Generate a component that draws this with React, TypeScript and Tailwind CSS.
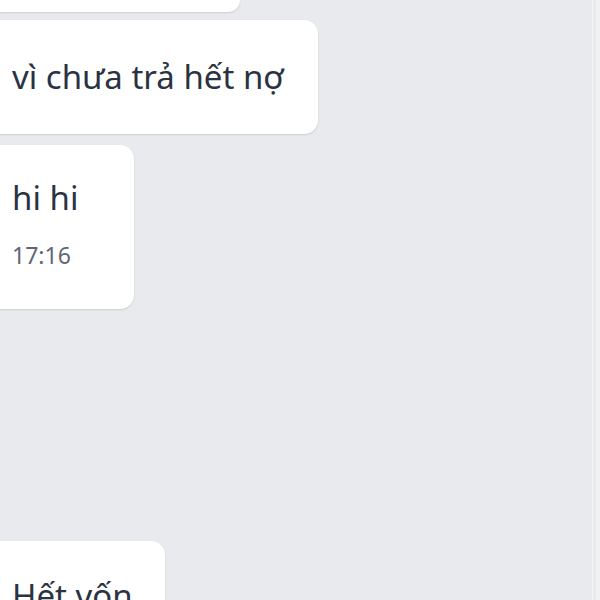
import React from 'react';

const bubble =
  'bg-white rounded-r-[14px] shadow-[0_1px_2px_rgba(0,0,0,0.12)]';

export default function App() {
  return (
    <div
      className="w-[600px] h-[600px] overflow-hidden bg-[#e9eaee] flex"
      style={{ fontFamily: '"Noto Sans", "Open Sans", sans-serif' }}
    >
      <div className="flex-1 flex flex-col">
        <div className={`${bubble} w-[240px] h-[12px] shrink-0 rounded-tr-none`} />

        <div className={`${bubble} mt-[8px] w-[318px] h-[114px] shrink-0 flex items-center pl-[12px]`}>
          <span className="text-[33px] leading-none text-[#2b3342] -mt-[1px]">vì chưa trả hết nợ</span>
        </div>

        <div className={`${bubble} mt-[11px] w-[134px] h-[164px] shrink-0 flex flex-col pl-[12px] pt-[36px]`}>
          <span className="text-[33px] leading-none text-[#2b3342]">hi hi</span>
          <span className="mt-[30px] text-[23px] leading-none text-[#5f6675]">17:16</span>
        </div>

        <div className={`${bubble} mt-[232px] w-[165px] h-[120px] shrink-0 pl-[12px] pt-[38px]`}>
          <span className="text-[33px] leading-none text-[#2b3342]">Hết vốn</span>
        </div>
      </div>
      <div className="w-px bg-[#f3f4f6]" />
      <div className="w-[3px]" />
      <div className="w-px bg-[#f3f4f6]" />
      <div className="w-[3px] bg-[#eef0f2]" />
    </div>
  );
}
